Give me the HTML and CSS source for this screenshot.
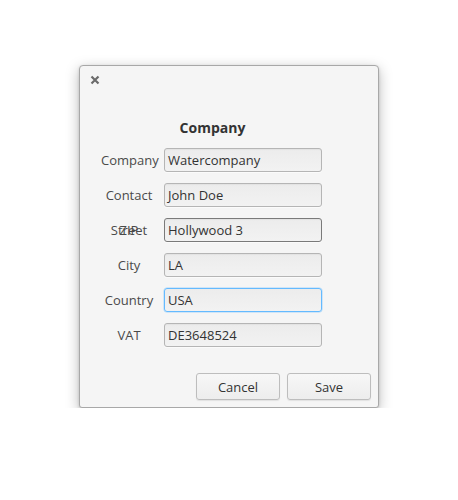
FILE: index.html
```html
<!DOCTYPE html>
<html>
<head>
<meta charset="utf-8">
<link rel="stylesheet" href="styles.css">
</head>
<body>
<div class="dialog">
  <div class="header">
    <svg class="close" width="10" height="10" viewBox="0 0 10 10"><path d="M1.5 1.5 L8.5 8.5 M8.5 1.5 L1.5 8.5" stroke="#6b6b6b" stroke-width="2.2" stroke-linecap="butt"/></svg>
  </div>
  <div class="content">
    <div class="form">
      <div class="title">Company</div>
      <div class="label r1">Company</div>
      <div class="input r1">Watercompany</div>
      <div class="label r2">Contact</div>
      <div class="input r2">John Doe</div>
      <div class="label r3">Street</div>
      <div class="label r3">ZIP</div>
      <div class="input r3 hover">Hollywood 3</div>
      <div class="label r4">City</div>
      <div class="input r4">LA</div>
      <div class="label r5">Country</div>
      <div class="input r5 focus">USA</div>
      <div class="label r6">VAT</div>
      <div class="input r6">DE3648524</div>
    </div>
  </div>
  <div class="actions">
    <button class="btn">Cancel</button>
    <button class="btn">Save</button>
  </div>
</div>
</body>
</html>
```
FILE: styles.css
```css
html, body {
  margin: 0;
  padding: 0;
  background: #ffffff;
}
body {
  font-family: "Open Sans", "Noto Sans", sans-serif;
  font-size: 13px;
  color: #333333;
}
.dialog {
  margin: 65px 0 0 79px;
  width: 298px;
  height: 341px;
  background: #f5f5f5;
  border: 1px solid #a8a8a8;
  border-radius: 4px 4px 3px 3px;
  box-shadow: 0 4px 14px rgba(0,0,0,0.27), 0 1px 3px rgba(0,0,0,0.15);
  display: flex;
  flex-direction: column;
}
.header {
  height: 30px;
  box-sizing: border-box;
  display: flex;
  align-items: flex-start;
  padding: 9px 0 0 10px;
}
.close {
  display: block;
}
.content {
  flex: 1;
  display: flex;
  justify-content: flex-start;
  padding-left: 21px;
}
.form {
  display: grid;
  grid-template-columns: 56px 158px;
  column-gap: 7px;
  row-gap: 11px;
  grid-template-rows: auto repeat(6, 24px);
  align-content: start;
  margin-top: 24px;
}
.title {
  grid-column: 1 / 3;
  text-align: center;
  font-weight: bold;
  font-size: 14px;
  color: #333;
  line-height: 20px;
  margin-bottom: -1px;
  margin-top: -2px;
  padding-left: 2px;
}
.label {
  grid-column: 1;
  text-align: center;
  align-self: center;
  color: #4a4a4a;
  line-height: 18px;
}
.r1 { grid-row: 2; }
.r2 { grid-row: 3; }
.r3 { grid-row: 4; }
.r4 { grid-row: 5; }
.r5 { grid-row: 6; }
.r6 { grid-row: 7; }
.input {
  grid-column: 2;
  box-sizing: border-box;
  height: 24px;
  border: 1px solid #b5b5b5;
  border-radius: 3px;
  background: linear-gradient(#ececec, #f2f2f2);
  box-shadow: inset 0 1px 1px rgba(0,0,0,0.04), 0 1px 0 rgba(255,255,255,0.6);
  padding: 0 3px;
  line-height: 22px;
  color: #333;
}
.input.hover {
  border-color: #7a7a7a;
}
.input.focus {
  border-color: #64baff;
  box-shadow: 0 0 0 0.5px rgba(100,186,255,0.5);
}
.actions {
  display: flex;
  justify-content: flex-end;
  gap: 7px;
  padding: 0 7px 7px 0;
}
.btn {
  font-family: "Open Sans", "Noto Sans", sans-serif;
  font-size: 13px;
  color: #333;
  width: 84px;
  height: 27px;
  border: 1px solid #bdbdbd;
  border-radius: 3px;
  background: linear-gradient(#f7f7f7, #ededed);
  box-shadow: 0 1px 1px rgba(0,0,0,0.08);
  padding: 0;
}
```
